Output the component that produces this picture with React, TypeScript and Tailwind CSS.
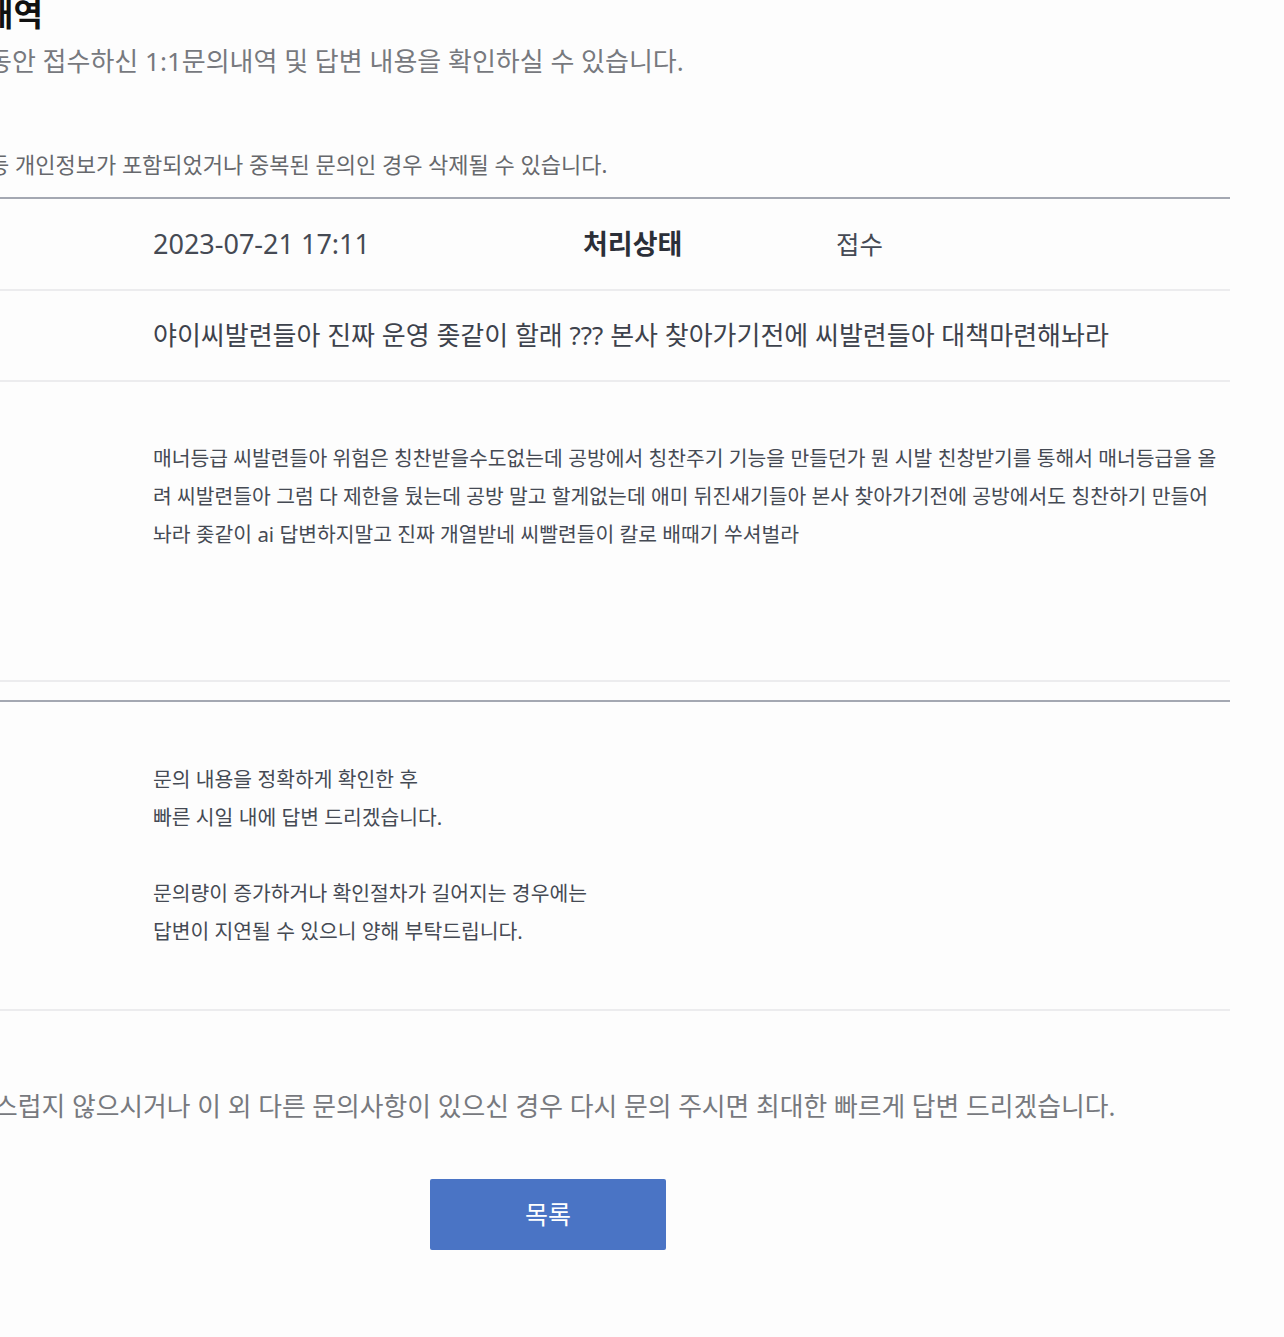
import React from "react";

export default function App() {
  return (
    <div className="w-full min-h-[1337px] bg-[#fdfdfd] overflow-hidden font-['Noto_Sans','Noto_Sans_CJK_KR',sans-serif]">
      <div className="w-[1230px]">
        {/* Header */}
        <h1 className="-mt-[2px] -ml-[16px] text-[32px] leading-[32px] font-bold text-[#111111] whitespace-nowrap">
          내역
        </h1>
        <p className="mt-[18px] -ml-[12px] text-[26px] leading-[26px] text-[#77797e] whitespace-nowrap">
          동안 접수하신 1:1문의내역 및 답변 내용을 확인하실 수 있습니다.
        </p>
        <p className="mt-[79px] -ml-[11px] text-[22px] leading-[22px] text-[#66686c] whitespace-nowrap">
          등 개인정보가 포함되었거나 중복된 문의인 경우 삭제될 수 있습니다.
        </p>

        {/* Table */}
        <div className="mt-[22px] border-t-2 border-[#a4a8b2]">
          <div className="h-[92px] flex items-center pl-[153px] border-b-2 border-[#ececee]">
            <div className="w-[430px] text-[27px] text-[#454a54] whitespace-nowrap">2023-07-21 17:11</div>
            <div className="w-[253px] text-[27px] font-bold text-[#2b2f38] whitespace-nowrap">처리상태</div>
            <div className="text-[25.5px] text-[#454a54] whitespace-nowrap">접수</div>
          </div>
          <div className="h-[91px] flex items-center pl-[153px] border-b-2 border-[#ececee]">
            <div className="text-[26px] text-[#3d424c] whitespace-nowrap">
              야이씨발련들아 진짜 운영 좆같이 할래 ??? 본사 찾아가기전에 씨발련들아 대책마련해놔라
            </div>
          </div>
          <div className="h-[300px] pt-[57px] pl-[153px] border-b-2 border-[#ececee]">
            <div className="text-[20.4px] leading-[38px] text-[#454a54] whitespace-nowrap">
              <div>매너등급 씨발련들아 위험은 칭찬받을수도없는데 공방에서 칭찬주기 기능을 만들던가 뭔 시발 친창받기를 통해서 매너등급을 올</div>
              <div>려 씨발련들아 그럼 다 제한을 뒀는데 공방 말고 할게없는데 애미 뒤진새기들아 본사 찾아가기전에 공방에서도 칭찬하기 만들어</div>
              <div>놔라 좆같이 ai 답변하지말고 진짜 개열받네 씨빨련들이 칼로 배때기 쑤셔벌라</div>
            </div>
          </div>
          <div className="h-[18px]" />
          <div className="h-[311px] pt-[58px] pl-[153px] border-t-2 border-b-2 border-t-[#a4a8b2] border-b-[#ececee]">
            <div className="text-[20.4px] leading-[38px] text-[#454a54] whitespace-nowrap">
              <div>문의 내용을 정확하게 확인한 후</div>
              <div>빠른 시일 내에 답변 드리겠습니다.</div>
              <div className="h-[38px]" />
              <div>문의량이 증가하거나 확인절차가 길어지는 경우에는</div>
              <div>답변이 지연될 수 있으니 양해 부탁드립니다.</div>
            </div>
          </div>
        </div>

        {/* Bottom notice */}
        <p className="mt-[82px] -ml-[6px] text-[25.8px] leading-[26px] text-[#77797e] whitespace-nowrap">
          스럽지 않으시거나 이 외 다른 문의사항이 있으신 경우 다시 문의 주시면 최대한 빠르게 답변 드리겠습니다.
        </p>

        <div className="mt-[60px] pl-[430px]">
          <button className="w-[236px] h-[71px] rounded-[2px] bg-[#4a74c5] text-white text-[25px] flex items-center justify-center">
            목록
          </button>
        </div>
      </div>
    </div>
  );
}
